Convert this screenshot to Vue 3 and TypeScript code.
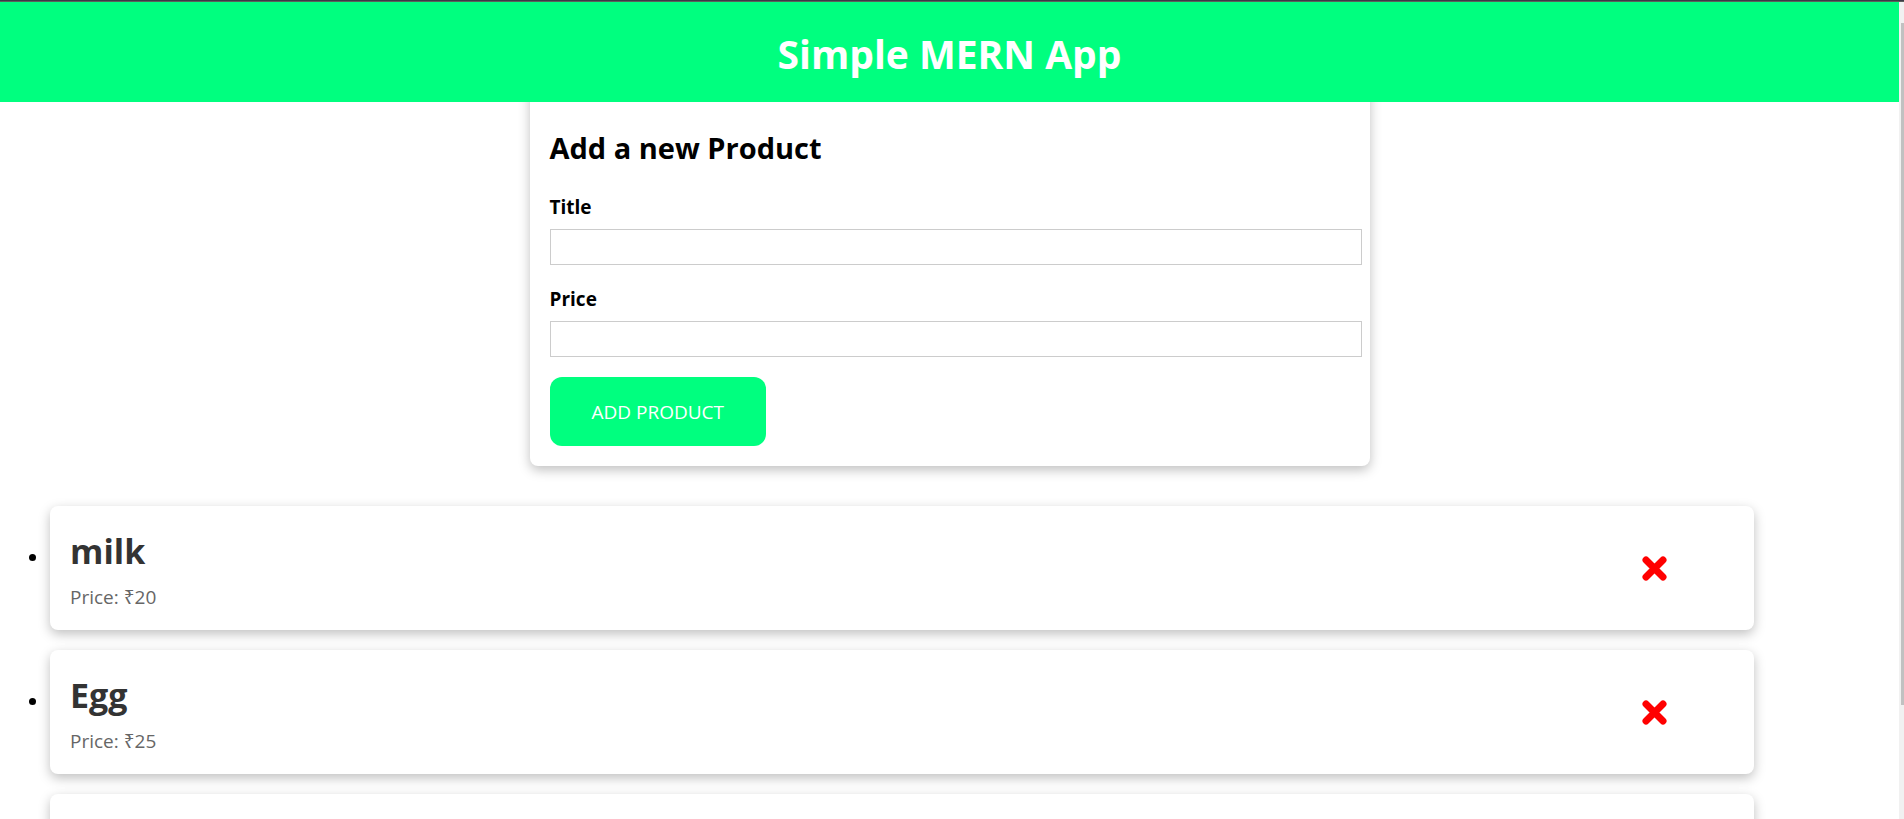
<script setup lang="ts">
import { ref } from 'vue'

interface Product {
  id: number
  title: string
  price: string
}

const title = ref('')
const price = ref('')
const products = ref<Product[]>([
  { id: 1, title: 'milk', price: '20' },
  { id: 2, title: 'Egg', price: '25' },
  { id: 3, title: '', price: '' },
])

function addProduct() {
  if (!title.value || !price.value) return
  products.value.push({ id: Date.now(), title: title.value, price: price.value })
  title.value = ''
  price.value = ''
}

function removeProduct(id: number) {
  products.value = products.value.filter((p) => p.id !== id)
}
</script>

<template>
  <div class="window">
    <div class="page">
      <header class="header">
        <h1>Simple MERN App</h1>
      </header>
      <main>
        <form class="form" @submit.prevent="addProduct">
          <h2>Add a new Product</h2>
          <label for="title">Title</label>
          <input id="title" v-model="title" type="text" />
          <label for="price">Price</label>
          <input id="price" v-model="price" type="text" />
          <button class="add" type="submit">ADD PRODUCT</button>
        </form>
        <ul class="products">
          <li v-for="product in products" :key="product.id">
            <article class="card">
              <div>
                <h3>{{ product.title }}</h3>
                <p v-if="product.price">Price: ₹{{ product.price }}</p>
              </div>
              <button
                v-if="product.title"
                class="remove"
                type="button"
                :aria-label="`Delete ${product.title}`"
                @click="removeProduct(product.id)"
              >
                <svg viewBox="0 0 25 25" aria-hidden="true">
                  <path d="M4 4 21 21M21 4 4 21" />
                </svg>
              </button>
            </article>
          </li>
        </ul>
      </main>
    </div>
    <div class="scrollbar" aria-hidden="true"><div class="thumb"></div></div>
  </div>
</template>

<style>
body {
  margin: 0;
  background: #fff;
}
</style>

<style scoped>
.window {
  display: flex;
  box-sizing: border-box;
  height: 100vh;
  overflow: hidden;
  padding-top: 1px;
  border-top: 1px solid #3b3b47;
  background: #5c605c;
  font-family: 'Segoe UI', 'Open Sans', 'Noto Sans', sans-serif;
  color: #000;
}

.page {
  flex: 1;
  min-width: 0;
  overflow: hidden;
  background: #fff;
}

.header {
  position: relative;
  z-index: 1;
  padding: 22px 0 18px;
  background: #00ff7f;
  color: #fff;
  text-align: center;
}

h1,
h2,
h3,
p {
  margin: 0;
}

h1 {
  font-size: 39px;
  line-height: 60px;
}

.form {
  box-sizing: border-box;
  display: flex;
  flex-direction: column;
  align-items: flex-start;
  max-width: 840px;
  margin: -20px auto 40px;
  padding: 46px 20px 20px;
  border-radius: 8px;
  box-shadow: 0 4px 12px rgba(0, 0, 0, 0.25);
}

h2 {
  margin-bottom: 25px;
  font-size: 29px;
  line-height: 40px;
}

label {
  margin-bottom: 8px;
  font-size: 19px;
  font-weight: 700;
  line-height: 28px;
}

input {
  box-sizing: content-box;
  width: 100%;
  height: 24px;
  margin: 0 0 20px;
  padding: 5px;
  border: 1px solid #ccc;
  border-radius: 0;
  background: #fff;
  font: inherit;
  font-size: 16px;
}

button {
  border: 0;
  font: inherit;
  cursor: pointer;
}

.add {
  padding: 21px 42px 19px;
  border-radius: 12px;
  background: #00ff7f;
  color: #fff;
  font-size: 19px;
  line-height: 29px;
}

.products {
  display: flex;
  flex-direction: column;
  gap: 20px;
  margin: 0;
  padding: 0;
  list-style: none;
}

.products li {
  display: flex;
}

.products li::before {
  content: '';
  flex: none;
  width: 7px;
  height: 7px;
  margin: 48px 14px 0 29px;
  border-radius: 50%;
  background: #000;
}

.card {
  box-sizing: border-box;
  flex: 0 0 calc(90% - 5px);
  display: flex;
  align-items: center;
  justify-content: space-between;
  min-height: 124px;
  padding: 19px 20px;
  border-radius: 8px;
  box-shadow: 0 4px 12px rgba(0, 0, 0, 0.25);
}

h3 {
  margin-bottom: 6px;
  color: #333;
  font-size: 34px;
  line-height: 52px;
}

p {
  color: #666;
  font-size: 19px;
  line-height: 28px;
}

.remove {
  display: flex;
  padding: 20px 67px;
  background: none;
}

.remove svg {
  width: 25px;
  height: 25px;
  fill: none;
  stroke: #f00;
  stroke-width: 7;
  stroke-linecap: round;
}

.scrollbar {
  box-sizing: border-box;
  display: flex;
  flex-direction: column;
  flex: none;
  width: 5px;
  padding: 21px 0 0 2px;
  background: #f1f1f1;
}

.thumb {
  flex: 6;
  background: #c1c1c1;
}

.scrollbar::after {
  content: '';
  flex: 1;
}
</style>
